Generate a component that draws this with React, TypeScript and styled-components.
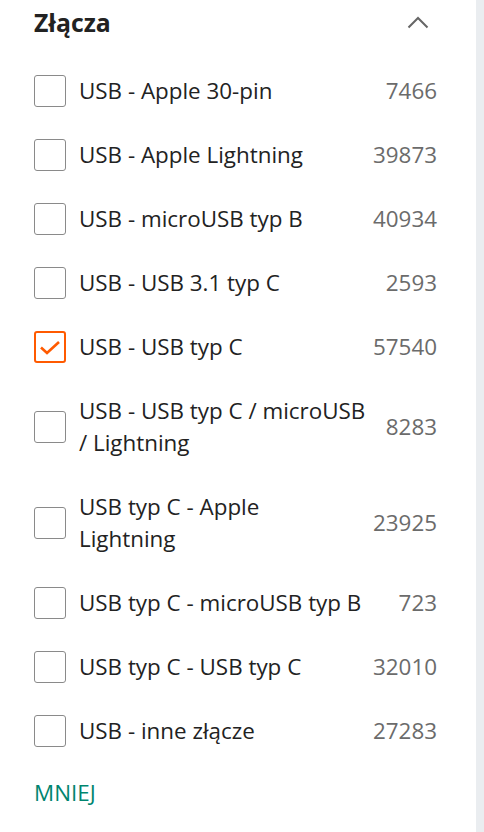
import React from "react";
import styled, { createGlobalStyle } from "styled-components";

const Global = createGlobalStyle`
  html, body { margin: 0; padding: 0; background: #fff; }
  body { font-family: "Open Sans", "Noto Sans", sans-serif; -webkit-font-smoothing: antialiased; }
`;

const Page = styled.div`
  display: flex;
  min-height: 832px;
  width: 484px;
`;

const Panel = styled.section`
  flex: 1;
  padding: 0 39px 0 34px;
  background: #fff;
`;

const Gutter = styled.div`
  width: 8px;
  background: #eaedf0;
`;

const Header = styled.header`
  display: flex;
  align-items: center;
  justify-content: space-between;
  height: 44px;
  margin-bottom: 15px;
`;

const Title = styled.h2`
  margin: 0;
  font-size: 24.8px;
  font-weight: 700;
  color: #222;
`;

const Toggle = styled.button`
  border: 0;
  background: none;
  padding: 0;
  margin-right: 8px;
  display: flex;
  color: #666;
  cursor: pointer;
`;

const List = styled.ul`
  list-style: none;
  margin: 0;
  padding: 0;
`;

const Row = styled.li`
  display: flex;
  align-items: center;
  padding: 16px 0;
  gap: 13px;
`;

const Box = styled.span<{ $checked?: boolean }>`
  flex: none;
  box-sizing: border-box;
  width: 32px;
  height: 32px;
  border-radius: 3px;
  border: ${(p) => (p.$checked ? "2px solid #ff5a00" : "1px solid #8a8a8a")};
  display: flex;
  align-items: center;
  justify-content: center;
  color: #ff5a00;
`;

const Label = styled.span`
  flex: 1;
  font-size: 22.4px;
  line-height: 32px;
  color: #222;
`;

const Count = styled.span`
  flex: none;
  font-size: 22.4px;
  line-height: 32px;
  color: #6b6b6b;
  margin-left: 2px;
`;

const More = styled.button`
  border: 0;
  background: none;
  padding: 0;
  margin-top: 16px;
  font-family: inherit;
  font-size: 22.4px;
  line-height: 28px;
  color: #00856f;
  cursor: pointer;
`;

const items: { label: string; count: number; checked?: boolean }[] = [
  { label: "USB - Apple 30-pin", count: 7466 },
  { label: "USB - Apple Lightning", count: 39873 },
  { label: "USB - microUSB typ B", count: 40934 },
  { label: "USB - USB 3.1 typ C", count: 2593 },
  { label: "USB - USB typ C", count: 57540, checked: true },
  { label: "USB - USB typ C / microUSB / Lightning", count: 8283 },
  { label: "USB typ C - Apple Lightning", count: 23925 },
  { label: "USB typ C - microUSB typ B", count: 723 },
  { label: "USB typ C - USB typ C", count: 32010 },
  { label: "USB - inne złącze", count: 27283 },
];

export default function App() {
  return (
    <>
      <Global />
      <Page>
        <Panel>
          <Header>
            <Title>Złącza</Title>
            <Toggle aria-label="zwiń">
              <svg width="22" height="14" viewBox="0 0 22 14" fill="none">
                <path d="M1.5 12.5L11 3L20.5 12.5" stroke="currentColor" strokeWidth="2" />
              </svg>
            </Toggle>
          </Header>
          <List>
            {items.map((it) => (
              <Row key={it.label}>
                <Box $checked={it.checked}>
                  {it.checked && (
                    <svg width="22" height="16" viewBox="0 0 22 16" fill="none">
                      <path d="M2 8.5L8 14L20 3" stroke="currentColor" strokeWidth="2.6" />
                    </svg>
                  )}
                </Box>
                <Label>{it.label}</Label>
                <Count>{it.count}</Count>
              </Row>
            ))}
          </List>
          <More>MNIEJ</More>
        </Panel>
        <Gutter />
      </Page>
    </>
  );
}
